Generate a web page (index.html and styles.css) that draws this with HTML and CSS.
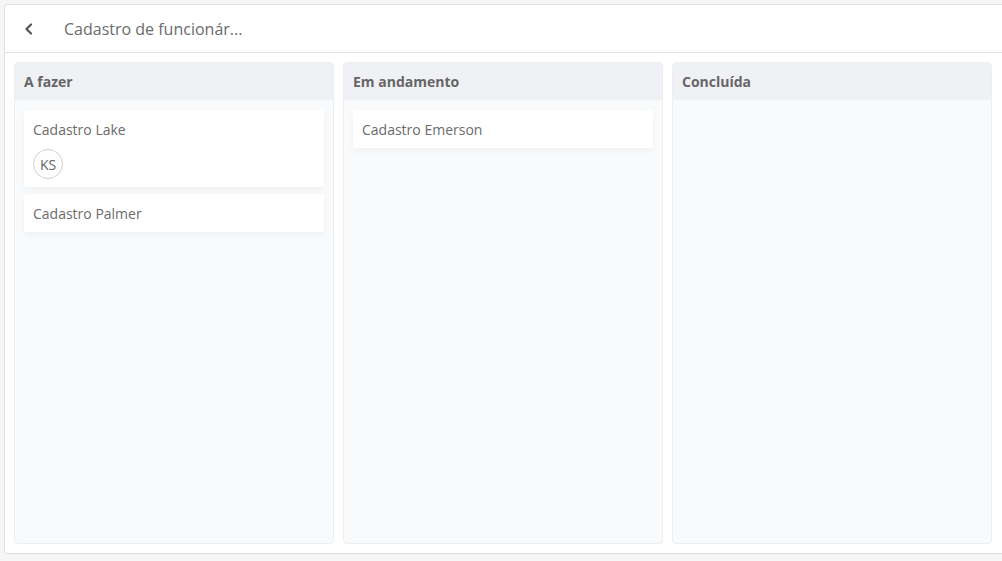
FILE: index.html
```html
<!DOCTYPE html>
<html lang="pt-BR">
<head>
<meta charset="utf-8">
<title>Cadastro de funcionários</title>
<link rel="stylesheet" href="styles.css">
</head>
<body>
<div class="page">
  <div class="panel">
    <header class="topbar">
      <button class="back" aria-label="Voltar">
        <svg width="9" height="12" viewBox="0 0 9 12"><path d="M7 1.5 L2.5 6 L7 10.5" fill="none" stroke="#555" stroke-width="2.2" stroke-linecap="round" stroke-linejoin="round"/></svg>
      </button>
      <h1 class="title">Cadastro de funcionár...</h1>
    </header>
    <main class="board">
      <section class="column">
        <div class="column-head">A fazer</div>
        <div class="column-body">
          <div class="card">
            <div class="card-title">Cadastro Lake</div>
            <div class="avatar">KS</div>
          </div>
          <div class="card">
            <div class="card-title">Cadastro Palmer</div>
          </div>
        </div>
      </section>
      <section class="column">
        <div class="column-head">Em andamento</div>
        <div class="column-body">
          <div class="card">
            <div class="card-title">Cadastro Emerson</div>
          </div>
        </div>
      </section>
      <section class="column">
        <div class="column-head">Concluída</div>
        <div class="column-body"></div>
      </section>
    </main>
  </div>
</div>
</body>
</html>
```
FILE: styles.css
```css
html, body {
  margin: 0;
  height: 100%;
  overflow: hidden;
}

body {
  background: #f6f6f6;
  font-family: "Open Sans", "Liberation Sans", sans-serif;
  color: #6b6b6b;
}

.page {
  height: 100%;
  padding: 4px 0 0 4px;
  box-sizing: border-box;
}

.panel {
  width: calc(100% + 10px);
  height: 550px;
  box-sizing: border-box;
  background: #fff;
  border: 1px solid #dedede;
  border-radius: 3px;
  display: flex;
  flex-direction: column;
}

.topbar {
  height: 47px;
  flex: none;
  border-bottom: 1px solid #e2e2e2;
  display: flex;
  align-items: center;
}

.back {
  border: 0;
  background: none;
  padding: 0;
  margin-left: 19px;
  width: 9px;
  height: 12px;
  display: flex;
  cursor: pointer;
}

.title {
  margin: 0 0 0 31px;
  font-size: 16px;
  font-weight: 400;
  color: #6b6b6b;
}

.board {
  flex: 1;
  min-height: 0;
  padding: 9px 10px 9px 9px;
  display: flex;
  gap: 9px;
}

.column {
  width: 320px;
  flex: none;
  box-sizing: border-box;
  border: 1px solid #eceef2;
  border-radius: 4px;
  background: #f9fafc;
  display: flex;
  flex-direction: column;
  overflow: hidden;
}

.column-head {
  height: 37px;
  flex: none;
  background: #f0f1f5;
  display: flex;
  align-items: center;
  padding-left: 9px;
  font-size: 14px;
  font-weight: 700;
  color: #666;
}

.column-body {
  flex: 1;
  padding: 10px 9px;
  display: flex;
  flex-direction: column;
  gap: 7px;
}

.card {
  background: #fff;
  border-radius: 2px;
  padding: 10px 9px 9px;
  box-shadow: 0 3px 6px rgba(0, 0, 0, 0.04);
}

.card-title {
  font-size: 14px;
  line-height: 19px;
  color: #6b6b6b;
}

.avatar {
  margin-top: 10px;
  margin-bottom: -1px;
  width: 28px;
  height: 28px;
  border: 1px solid #cfcfcf;
  border-radius: 50%;
  display: flex;
  align-items: center;
  justify-content: center;
  font-size: 14px;
  color: #666;
}
```
